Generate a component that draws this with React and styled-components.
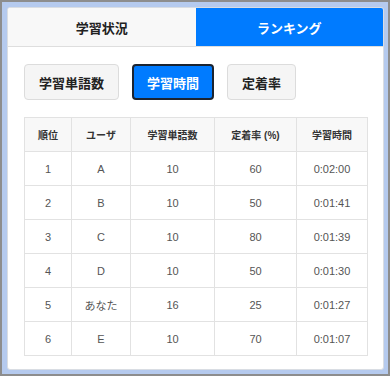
import React, { useState } from 'react';
import styled, { createGlobalStyle } from 'styled-components';

const GlobalStyle = createGlobalStyle`
  html, body {
    margin: 0;
    padding: 0;
  }
  body {
    font-family: "Liberation Sans", "Noto Sans CJK JP", sans-serif;
  }
`;

const rows = [
  { rank: 1, user: 'A', words: 10, rate: 60, time: '0:02:00' },
  { rank: 2, user: 'B', words: 10, rate: 50, time: '0:01:41' },
  { rank: 3, user: 'C', words: 10, rate: 80, time: '0:01:39' },
  { rank: 4, user: 'D', words: 10, rate: 50, time: '0:01:30' },
  { rank: 5, user: 'あなた', words: 16, rate: 25, time: '0:01:27' },
  { rank: 6, user: 'E', words: 10, rate: 70, time: '0:01:07' },
];

const sorts = ['学習単語数', '学習時間', '定着率'];

const App = () => {
  const [tab, setTab] = useState('ranking');
  const [sort, setSort] = useState('学習時間');

  return (
    <Frame>
      <GlobalStyle />
      <Card>
        <Tabs>
          <Tab active={tab === 'status'} onClick={() => setTab('status')}>学習状況</Tab>
          <Tab active={tab === 'ranking'} onClick={() => setTab('ranking')}>ランキング</Tab>
        </Tabs>
        <Body>
          <SortBar>
            {sorts.map((s) => (
              <SortButton key={s} active={sort === s} onClick={() => setSort(s)}>
                {s}
              </SortButton>
            ))}
          </SortBar>
          <Table>
            <colgroup>
              <col style={{ width: 47 }} />
              <col style={{ width: 59 }} />
              <col style={{ width: 84 }} />
              <col style={{ width: 82 }} />
              <col style={{ width: 71 }} />
            </colgroup>
            <thead>
              <tr>
                <Th>順位</Th>
                <Th>ユーザ</Th>
                <Th>学習単語数</Th>
                <Th>定着率 (%)</Th>
                <Th>学習時間</Th>
              </tr>
            </thead>
            <tbody>
              {rows.map((r) => (
                <tr key={r.rank}>
                  <Td>{r.rank}</Td>
                  <Td>{r.user}</Td>
                  <Td>{r.words}</Td>
                  <Td>{r.rate}</Td>
                  <Td>{r.time}</Td>
                </tr>
              ))}
            </tbody>
          </Table>
        </Body>
      </Card>
    </Frame>
  );
};

const Frame = styled.div`
  box-sizing: border-box;
  width: 390px;
  height: 376px;
  border: 2px solid #8d8d8d;
  background: #b5caee;
  padding: 5px 4px 4px 5px;
  display: flex;
`;

const Card = styled.div`
  flex: 1;
  display: flex;
  flex-direction: column;
  background: #fff;
  border: 1px solid #d9dde3;
  border-radius: 3px;
  overflow: hidden;
`;

const Tabs = styled.div`
  display: flex;
  border-bottom: 1px solid #dedede;
`;

const Tab = styled.div`
  flex: 1;
  height: 38px;
  display: flex;
  align-items: center;
  justify-content: center;
  font-family: "Noto Sans CJK JP", sans-serif;
  font-size: 13px;
  font-weight: 700;
  cursor: pointer;
  color: ${(p) => (p.active ? '#fff' : '#222')};
  background: ${(p) => (p.active ? '#007bff' : '#f8f8f8')};
`;

const Body = styled.div`
  padding: 17px 15px 0 16px;
`;

const SortBar = styled.div`
  display: flex;
  gap: 13px;
  margin-bottom: 17px;
`;

const SortButton = styled.button`
  box-sizing: border-box;
  height: 36px;
  padding: 0 ${(p) => (p.active ? '13px' : '14px')};
  font-family: "Noto Sans CJK JP", sans-serif;
  font-size: 13px;
  font-weight: 700;
  border-radius: 4px;
  cursor: pointer;
  color: ${(p) => (p.active ? '#fff' : '#222')};
  background: ${(p) => (p.active ? '#007bff' : '#f5f5f5')};
  border: ${(p) => (p.active ? '2px solid #1c2430' : '1px solid #dcdcdc')};
`;

const Table = styled.table`
  width: 343px;
  border-collapse: collapse;
  table-layout: fixed;
`;

const Th = styled.th`
  height: 33px;
  padding: 0;
  border: 1px solid #e2e2e2;
  background: #f8f8f8;
  font-size: 10px;
  font-weight: 700;
  color: #333;
  text-align: center;
`;

const Td = styled.td`
  height: 33px;
  padding: 0;
  border: 1px solid #e2e2e2;
  font-size: 11px;
  color: #555;
  text-align: center;
`;

export default App;
